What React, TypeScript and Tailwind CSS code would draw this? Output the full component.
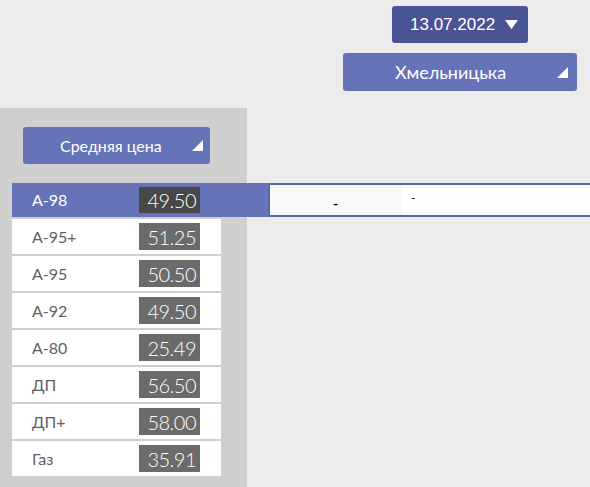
import React from "react";

const fuels = [
  { name: "А-95+", price: "51.25" },
  { name: "А-95", price: "50.50" },
  { name: "А-92", price: "49.50" },
  { name: "А-80", price: "25.49" },
  { name: "ДП", price: "56.50" },
  { name: "ДП+", price: "58.00" },
  { name: "Газ", price: "35.91" },
];

function Corner() {
  return (
    <svg width="11" height="11" viewBox="0 0 11 11" className="shrink-0">
      <polygon points="11,0 11,11 0,11" fill="#ffffff" />
    </svg>
  );
}

export default function App() {
  const gothic = { fontFamily: "Lato, 'Open Sans', sans-serif" };

  return (
    <div
      className="w-[590px] h-[487px] overflow-hidden bg-[#ececec] flex flex-col"
      style={gothic}
    >
      <div className="h-[108px] pt-[6px] flex flex-col">
        <div
          className="ml-[392px] w-[136px] h-[37px] rounded-[3px] bg-[#4a5394] flex items-center pl-[18px] gap-[10px] text-white text-[17px]"
          style={{ fontFamily: "'Liberation Sans', Arial, sans-serif" }}
        >
          <span>13.07.2022</span>
          <svg width="13" height="9" viewBox="0 0 13 9">
            <polygon points="0,0 13,0 6.5,9" fill="#ffffff" />
          </svg>
        </div>
        <div className="ml-[343px] mt-[10px] w-[234px] h-[38px] rounded-[3px] bg-[#6673b8] flex items-center justify-between pl-[52px] pr-[9px] text-white text-[18px]">
          <span>Хмельницька</span>
          <Corner />
        </div>
      </div>

      <div className="flex-1 w-[247px] bg-[#cfcfcf] pt-[19px]">
        <div className="ml-[23px] w-[187px] h-[37px] rounded-[3px] bg-[#6673b8] flex items-center justify-between pl-[37px] pr-[7px] text-white text-[16px]">
          <span>Средняя цена</span>
          <Corner />
        </div>

        <div className="mt-[19px] ml-[12px] w-[578px] h-[34px] flex">
          <div className="w-[256px] bg-[#6673b8] flex items-center pl-[20px] text-white text-[16px]">
            <span className="w-[107px]">А-98</span>
            <span className="w-[61px] h-[26px] bg-[#474747] flex items-center justify-end pr-[4px] text-[20px] font-light tracking-[-0.5px] text-white">
              49.50
            </span>
          </div>
          <div className="flex-1 bg-white border-y-2 border-l-2 border-[#5b67ab] flex text-black">
            <div className="w-[131px] bg-[#f8f8f8] flex items-center justify-center pt-[6px] font-bold text-[14px]">
              -
            </div>
            <div className="flex items-center pl-[10px] pb-[4px] text-[12px]">-</div>
          </div>
        </div>

        <div className="mt-[2px] ml-[12px] w-[209px] flex flex-col gap-[2px]">
          {fuels.map((f) => (
            <div
              key={f.name}
              className="h-[35px] bg-white flex items-center pl-[20px] text-[#606060] text-[16px]"
            >
              <span className="w-[107px]">{f.name}</span>
              <span className="w-[61px] h-[27px] bg-[#6b6b6b] flex items-center justify-end pr-[4px] text-[20px] font-light tracking-[-0.5px] text-white">
                {f.price}
              </span>
            </div>
          ))}
        </div>
      </div>
    </div>
  );
}
